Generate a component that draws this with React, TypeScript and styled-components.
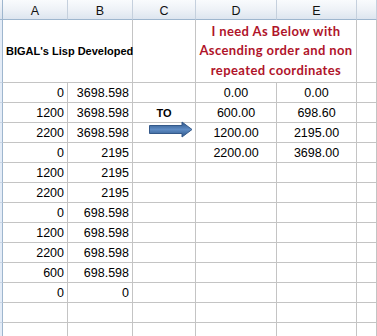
import { Fragment } from "react";
import styled, { createGlobalStyle } from "styled-components";

const GlobalStyle = createGlobalStyle`
  html, body {
    margin: 0;
    padding: 0;
    background: #fff;
  }
`;

const Sheet = styled.div`
  display: grid;
  grid-template-columns: 3px 65px 65px 63px 81px 80px 1fr;
  grid-template-rows: 20px 63px;
  grid-auto-rows: 20px;
  width: 377px;
  height: 336px;
  overflow: hidden;
  background: #fff;
  font-family: "Liberation Sans", Arial, sans-serif;
  color: #000;
`;

const Corner = styled.div`
  background: linear-gradient(#f3f6fa, #d9e2ee);
  border-right: 1px solid #9eb6ce;
  border-bottom: 1px solid #9eb6ce;
`;

const RowHead = styled.div`
  background: #e4ecf7;
  border-right: 1px solid #9eb6ce;
  border-bottom: 1px solid #c9d5e4;
`;

const ColHead = styled.div`
  display: flex;
  align-items: center;
  justify-content: center;
  padding-top: 2px;
  background: linear-gradient(#f9fbfd 0%, #eef2f7 50%, #dde5ef 100%);
  border-right: 1px solid #c5d0dd;
  border-bottom: 1px solid #9eb6ce;
  font-size: 12.5px;
  color: #111;
`;

const Cell = styled.div<{ $align?: "left" | "right" | "center"; $span?: number }>`
  position: relative;
  display: flex;
  align-items: center;
  justify-content: ${({ $align }) =>
    $align === "right" ? "flex-end" : $align === "center" ? "center" : "flex-start"};
  grid-column: span ${({ $span }) => $span ?? 1};
  padding: 0 3px;
  border-right: 1px solid #c4c4c4;
  border-bottom: 1px solid #c4c4c4;
  font-size: 12.5px;
  white-space: nowrap;
`;

const Title = styled.span`
  font-weight: bold;
  font-size: 11px;
`;

const Note = styled.div`
  width: 100%;
  text-align: center;
  font-family: Lato, "Liberation Sans", sans-serif;
  font-weight: bold;
  font-size: 13px;
  letter-spacing: 0.4px;
  line-height: 19.5px;
  color: #b0142a;
  white-space: normal;
`;

const To = styled.span`
  font-weight: bold;
  font-size: 11px;
`;

const Arrow = styled.svg`
  position: absolute;
  left: 16px;
  top: -2px;
  z-index: 1;
`;

const cols = ["A", "B", "C", "D", "E", ""];

const rows: string[][] = [
  ["0", "3698.598", "", "0.00", "0.00"],
  ["1200", "3698.598", "TO", "600.00", "698.60"],
  ["2200", "3698.598", "", "1200.00", "2195.00"],
  ["0", "2195", "", "2200.00", "3698.00"],
  ["1200", "2195", "", "", ""],
  ["2200", "2195", "", "", ""],
  ["0", "698.598", "", "", ""],
  ["1200", "698.598", "", "", ""],
  ["2200", "698.598", "", "", ""],
  ["600", "698.598", "", "", ""],
  ["0", "0", "", "", ""],
  ["", "", "", "", ""],
  ["", "", "", "", ""],
];

function ArrowIcon() {
  return (
    <Arrow width="44" height="17" viewBox="0 0 44 17">
      <defs>
        <linearGradient id="arrowFill" x1="0" y1="0" x2="0" y2="1">
          <stop offset="0%" stopColor="#2c5587" />
          <stop offset="50%" stopColor="#5f8cc4" />
          <stop offset="100%" stopColor="#2c5587" />
        </linearGradient>
      </defs>
      <path
        d="M0.5 4.5 H33 V1 L43 8.5 L33 16 V12.5 H0.5 Z"
        fill="url(#arrowFill)"
        stroke="#34598a"
        strokeWidth="1"
      />
    </Arrow>
  );
}

export default function App() {
  return (
    <>
      <GlobalStyle />
      <Sheet>
        <Corner />
        {cols.map((c, i) => (
          <ColHead key={i}>{c}</ColHead>
        ))}

        <RowHead />
        <Cell $span={2}>
          <Title>BIGAL's Lisp Developed</Title>
        </Cell>
        <Cell />
        <Cell $span={2} $align="center">
          <Note>
            I need As Below with
            <br />
            Ascending order and non
            <br />
            repeated coordinates
          </Note>
        </Cell>
        <Cell />

        {rows.map((r, ri) => (
          <Fragment key={ri}>
            <RowHead />
            <Cell $align="right">{r[0]}</Cell>
            <Cell $align="right">{r[1]}</Cell>
            <Cell $align="center">
              {r[2] === "TO" && <To>TO</To>}
              {ri === 2 && <ArrowIcon />}
            </Cell>
            <Cell $align="center">{r[3]}</Cell>
            <Cell $align="center">{r[4]}</Cell>
            <Cell />
          </Fragment>
        ))}
      </Sheet>
    </>
  );
}
